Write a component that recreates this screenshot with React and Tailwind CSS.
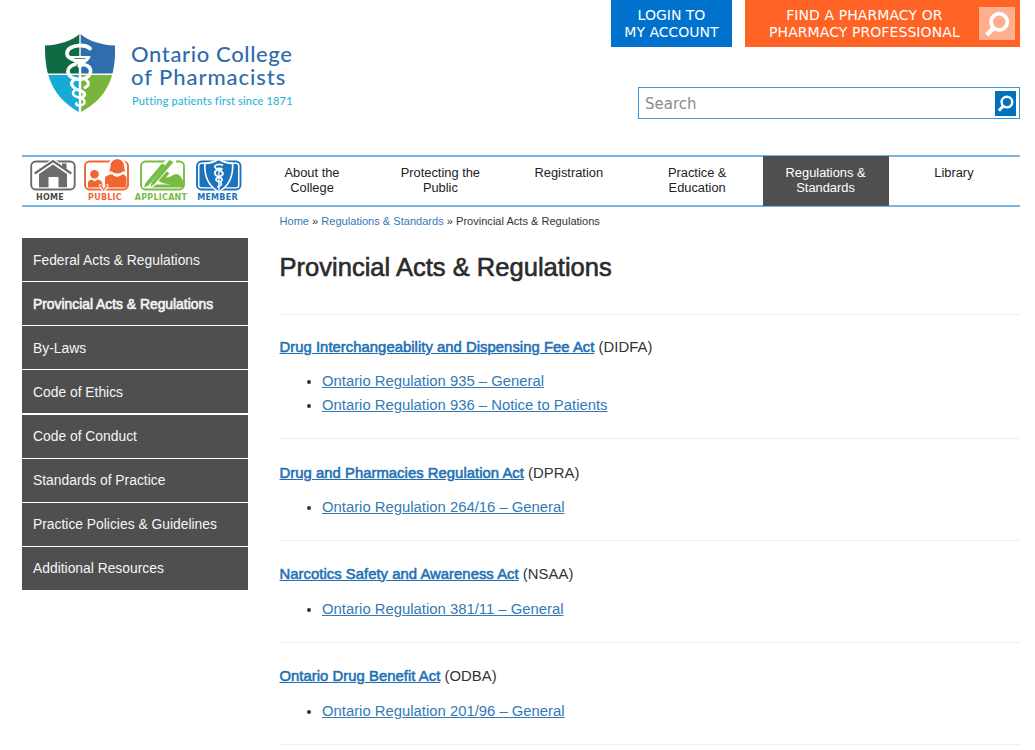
const navItems = [
  ['About the', 'College'],
  ['Protecting the', 'Public'],
  ['Registration'],
  ['Practice &', 'Education'],
  ['Regulations &', 'Standards'],
  ['Library'],
];

const sideItems = [
  'Federal Acts & Regulations',
  'Provincial Acts & Regulations',
  'By-Laws',
  'Code of Ethics',
  'Code of Conduct',
  'Standards of Practice',
  'Practice Policies & Guidelines',
  'Additional Resources',
];

const acts = [
  {
    title: 'Drug Interchangeability and Dispensing Fee Act',
    abbr: 'DIDFA',
    regs: ['Ontario Regulation 935 – General', 'Ontario Regulation 936 – Notice to Patients'],
    height: 'h-[124px] pt-[20px]',
    list: 'mt-[10px]',
  },
  { title: 'Drug and Pharmacies Regulation Act', abbr: 'DPRA', regs: ['Ontario Regulation 264/16 – General'], height: 'h-[102px] pt-[22px]', list: 'mt-[10px]' },
  { title: 'Narcotics Safety and Awareness Act', abbr: 'NSAA', regs: ['Ontario Regulation 381/11 – General'], height: 'h-[102px] pt-[21px]', list: 'mt-[11px]' },
  { title: 'Ontario Drug Benefit Act', abbr: 'ODBA', regs: ['Ontario Regulation 201/96 – General'], height: 'h-[102px] pt-[21px]', list: 'mt-[11px]' },
];

function Serpent() {
  return (
    <g fill="none" stroke="#fff" strokeLinecap="round">
      <path strokeWidth="3.800" d="M46 15.500C41 11 27 11.500 23.500 18C21.500 23 26 25.500 29 26.500" />
      <path strokeWidth="3.600" d="M31 31.500C24 33 22 39 26 43C31 48 43 47 46 41C48 36 45 32 39 31.500" />
      <path strokeWidth="3.200" d="M30 47C25 50 28 55 36 57.500C42 59.500 42 63 37 65" />
      <path strokeWidth="3" d="M42 47C45.500 49.500 45 53 41 54.500" />
      <path strokeWidth="2.400" d="M31 57C27 60 29 63 35 64.500C42 66 43 72 35 72.500C32.500 72.500 31.500 71 32.500 70" />
      <path strokeWidth="2.400" d="M36 33V78" />
      <path fill="#fff" strokeWidth="1" d="M26.500 23.500H46C45 28 41 29.500 38 31V34H34V31C31 29.500 27.500 28 26.500 23.500Z" />
      <path stroke="#3a8060" strokeWidth="0.900" d="M31 25.500H41" />
    </g>
  );
}

function Shield() {
  return (
    <svg width="72" height="80" viewBox="0 0 72 80" aria-hidden="true">
      <clipPath id="shield">
        <path d="M36 .5C43 7.500 57 12 71 12.500C72 43 64 65 36 79.500C9 65 .5 43 1 12.500C15 12 29 7.500 36 .5Z" />
      </clipPath>
      <g clipPath="url(#shield)">
        <rect width="35.300" height="40.500" fill="#0e6b43" />
        <rect x="36.700" width="36" height="40.500" fill="#306dac" />
        <rect y="42" width="35.300" height="38" fill="#14acd4" />
        <rect x="36.700" y="42" width="36" height="38" fill="#79b43b" />
      </g>
      <Serpent />
    </svg>
  );
}

function Magnifier({ className }) {
  return (
    <svg className={className} viewBox="0 0 24 24" fill="none" stroke="#fff" strokeWidth="3.400" aria-hidden="true">
      <circle cx="14" cy="10" r="7.500" />
      <path strokeWidth="4.200" d="M9 15.500L2.500 22" />
    </svg>
  );
}

function HomeIcon() {
  return (
    <svg width="46" height="34" viewBox="0 0 46 34" aria-hidden="true">
      <rect x="1.200" y="2.500" width="43.500" height="28" rx="4.500" fill="none" stroke="#6b6b6b" strokeWidth="1.900" />
      <path d="M23 -1L43 13.500L41 17H5L3 13.500Z" fill="#fff" />
      <path d="M32 4.500H36.500V11L32 8Z" fill="#6b6b6b" />
      <path d="M4.700 14.500L23 2L41.300 14.500" fill="none" stroke="#6b6b6b" strokeWidth="2.200" />
      <path d="M9 15L23 5.500L37 15V28.300H28.500V18H18.500V28.300H9Z" fill="#6b6b6b" />
    </svg>
  );
}

function PublicIcon() {
  return (
    <svg width="46" height="34" viewBox="0 0 46 34" aria-hidden="true">
      <rect x="1" y="2.500" width="43" height="28" rx="4.500" fill="none" stroke="#f26531" strokeWidth="1.900" />
      <circle cx="33.200" cy="7" r="9" fill="#fff" />
      <path d="M26.500 7C26.500 -2 40 -2 40 7L41 12.500H38.500C37 15 29.500 15 28 12.500H25.500Z" fill="#f26531" />
      <path d="M21 28.500V20C21 17 24 16 28.500 15.300C30 18.500 36 18.500 38 15.300C41 16 42.500 17 42.500 20V28.500Z" fill="#f26531" />
      <circle cx="10.500" cy="15.300" r="4.300" fill="#f26531" />
      <path d="M4 28.500V23.500C4 21.500 6 21 8 20.500L10.500 22.500L13.500 20.500C16 21 17.500 21.500 18 24L19 28.500Z" fill="#f26531" />
      <path d="M15 28.500H24.500L20 33Z" fill="#fff" />
      <path d="M15.500 25.500L19.500 31L24 25.500" fill="none" stroke="#fff" strokeWidth="2.600" />
      <path d="M16 26L19.700 30.800L23.500 26" fill="none" stroke="#f26531" strokeWidth="1.300" />
    </svg>
  );
}

function ApplicantIcon() {
  return (
    <svg width="46" height="34" viewBox="0 0 46 34" aria-hidden="true">
      <rect x="1" y="2.500" width="43" height="28" rx="4.500" fill="none" stroke="#79bc43" strokeWidth="1.900" />
      <path d="M27 0H36V4L18 20L10 29H3V24Z" fill="#fff" />
      <path d="M22 4.500L25.500 6.500L8.500 26.500L4 28.500L5.500 24Z" fill="#79bc43" />
      <path d="M29.500 1L33.500 3L14.500 25L10.500 28L11.500 23.500Z" fill="#79bc43" />
      <path d="M18.500 21.500L26.500 12.500L29.500 14L26 18.500C31 18.500 33 15 37 15C40 16 42 19 43 22V28.500H12L16.500 25.500H31C27 24.500 22 25 18.500 21.500Z" fill="#79bc43" />
    </svg>
  );
}

function MemberIcon() {
  return (
    <svg width="46" height="34" viewBox="0 0 46 34" aria-hidden="true">
      <rect x="1" y="2.500" width="43.500" height="28" rx="4.500" fill="#fff" stroke="#1b72bd" strokeWidth="1.900" />
      <rect x="3.500" y="5" width="38.500" height="23.300" rx="2" fill="#1b72bd" />
      <path d="M22.700 -1C27 2 32 3.500 37.500 3.500C38 16 35 27 22.700 33.500C10.500 27 7.500 16 8 3.500C13.500 3.500 18.500 2 22.700 -1Z" fill="#fff" />
      <path d="M22.700 1.300C27 4 31.500 5.200 35.800 5.200C36.300 16 33 26 22.700 32C12.500 26 9.200 16 9.700 5.200C14 5.200 18.500 4 22.700 1.300Z" fill="#1b72bd" />
      <g fill="none" stroke="#fff" strokeLinecap="round">
        <path strokeWidth="1.800" d="M26.500 6C23 4.500 18 6 19 8.500C20 11 26.500 11 27 14.500C27.300 17.500 20 17.500 20 20.500C20 23 25.500 22.500 25.500 25C25.500 26.500 22.500 27 22 28M20.500 11.500C18 13 18 16.500 23 17.800C26 18.800 27 20.800 25 22.300" />
        <path strokeWidth="1.300" d="M22.900 9V31" />
        <path strokeWidth="2.400" d="M21 10H25.500" />
      </g>
    </svg>
  );
}

function QuickLink({ label, Icon, color, width, pad }) {
  return (
    <a className={`flex flex-col items-center ${width} ${color}`}>
      <span className={pad}><Icon /></span>
      <span className="text-[8px] leading-[9px] font-bold tracking-[0.250px] whitespace-nowrap [font-family:'DejaVu_Sans',sans-serif]">{label}</span>
    </a>
  );
}

export default function App() {
  return (
    <div className="h-[750px] w-[1035px] overflow-hidden bg-white pl-[22px] text-[#333] [font-family:'Liberation_Sans',Arial,sans-serif]">
      <header className="flex h-[155px] w-[998px] justify-between">
        <a className="flex pt-[33px] pl-[22px]">
          <Shield />
          <div className="pt-[9px] pl-[15px] whitespace-nowrap [font-family:Lato,sans-serif]">
            <div className="text-[22px] leading-[23px] font-medium text-[#306dac]">
              <div className="tracking-[0.630px]">Ontario College</div>
              <div className="tracking-[0.950px]">of Pharmacists</div>
            </div>
            <div className="pt-[5px] pl-px text-[11px] leading-[16px] font-medium tracking-[0.180px] text-[#2db3d6]">Putting patients first since 1871</div>
          </div>
        </a>
        <div className="flex flex-col items-end [font-family:'DejaVu_Sans',Verdana,sans-serif]">
          <div className="flex h-[47px] gap-[13px] text-center text-[14px] leading-[17px] whitespace-nowrap text-white">
            <a className="w-[121px] bg-[#0072ce] pt-[7px]">LOGIN TO<br />MY ACCOUNT</a>
            <a className="flex w-[275px] justify-between bg-[#ff6426] pt-[7px] pr-[5px] pl-[24px]">
              <span className="tracking-[0.080px]">FIND A PHARMACY OR<br />PHARMACY PROFESSIONAL</span>
              <span className="flex h-[33px] w-[36px] items-center justify-center bg-[#ffae90]">
                <Magnifier className="size-[26px]" />
              </span>
            </a>
          </div>
          <div className="mt-[40px] flex h-[32px] w-[382px] items-center justify-between border border-[#3f93d4] pr-[3px] pl-[6px]">
            <span className="pt-[2px] text-[15px] text-[#8b8b8b]">Search</span>
            <span className="flex h-[25px] w-[21px] items-center justify-center bg-[#0072bc]">
              <Magnifier className="size-[17px]" />
            </span>
          </div>
        </div>
      </header>

      <nav className="flex h-[52px] w-[998px] border-y-2 border-[#74b5e4]">
        <div className="flex w-[227px] pt-[2px]">
          <QuickLink label="HOME" Icon={HomeIcon} color="text-[#4c4c4c]" width="w-[56px]" pad="pl-[6px]" />
          <QuickLink label="PUBLIC" Icon={PublicIcon} color="text-[#f26531]" width="w-[54px]" pad="pl-[3px]" />
          <QuickLink label="APPLICANT" Icon={ApplicantIcon} color="text-[#79bc43]" width="w-[58px]" pad="pl-[3px]" />
          <QuickLink label="MEMBER" Icon={MemberIcon} color="text-[#1b72bd]" width="w-[55px]" pad="pl-[3px]" />
        </div>
        <div className="flex gap-[2.400px] text-center text-[12.850px] leading-[15px] text-[#222]">
          {navItems.map((lines) => (
            <a key={lines[0]} className={`w-[126px] pt-[8px] ${lines[0] === 'Regulations &' ? 'bg-[#4f4f4f] text-white shadow-[0_-1px_0_#4f4f4f,0_1px_0_#4f4f4f]' : ''}`}>
              {lines.map((line) => <div key={line}>{line}</div>)}
            </a>
          ))}
        </div>
      </nav>

      <div className="flex">
        <aside className="w-[226px] pt-[31px]">
          <ul className="flex flex-col gap-[1.140px] text-[13.850px] text-[#f5f5f5]">
            {sideItems.map((item, index) => (
              <li key={item} className={`flex h-[43px] items-center bg-[#4f4f4f] pt-px pl-[11px] whitespace-nowrap ${index === 1 ? '[-webkit-text-stroke:0.600px]' : ''}`}>
                {item}
              </li>
            ))}
          </ul>
        </aside>
        <main className="ml-[31.500px] w-[740.500px]">
          <div className="pt-[7px] text-[11.070px] leading-[15px]">
            <a className="text-[#337ab7]">Home</a> » <a className="text-[#337ab7]">Regulations &amp; Standards</a> » Provincial Acts &amp; Regulations
          </div>
          <h1 className="mt-[21px] h-[64px] text-[25.550px] leading-[34px] text-[#2b2b2b] [-webkit-text-stroke:0.600px]">Provincial Acts &amp; Regulations</h1>
          {acts.map((act) => (
            <section key={act.abbr} className={`border-t border-[#eee] text-[14.850px] leading-[24px] ${act.height}`}>
              <p className="tracking-[0.030px]">
                <a className="text-[#2170b5] underline [-webkit-text-stroke:0.550px]">{act.title}</a> ({act.abbr})
              </p>
              <ul className={`list-disc pl-[42.500px] ${act.list}`}>
                {act.regs.map((reg) => (
                  <li key={reg}><a className="text-[#337ab7] underline">{reg}</a></li>
                ))}
              </ul>
            </section>
          ))}
          <hr className="border-[#eee]" />
        </main>
      </div>
    </div>
  );
}
